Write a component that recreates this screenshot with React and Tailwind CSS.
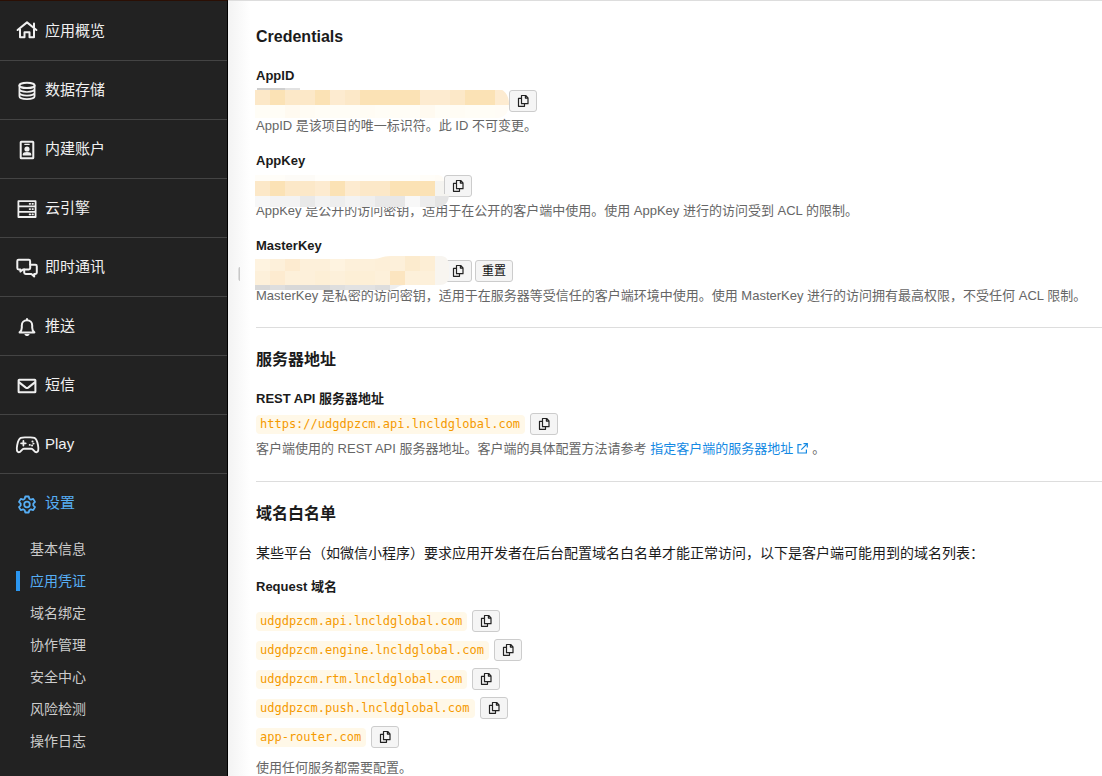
import React from "react";

const iconProps = {
  width: 24,
  height: 24,
  viewBox: "0 0 24 24",
  fill: "none",
  stroke: "currentColor",
  strokeWidth: 2,
  strokeLinejoin: "round",
  strokeLinecap: "round",
  overflow: "visible",
  "aria-hidden": true,
};

const icons = {
  home: (
    <svg {...iconProps}>
      <path d="M2.600 10 12 2.400l9.400 7.600M5 9v8.300h4.500v-5h5v5H19V9M19 3.400v4.200" />
    </svg>
  ),
  database: (
    <svg {...iconProps}>
      <ellipse cx="12" cy="6.400" rx="7.600" ry="2.700" />
      <path d="M4.400 6.400v10.800c0 1.600 3.400 2.900 7.600 2.900s7.600-1.300 7.600-2.900V6.400M4.400 10.100c0 1.600 3.400 2.900 7.600 2.900s7.600-1.300 7.600-2.900M4.400 13.700c0 1.600 3.400 2.900 7.600 2.900s7.600-1.300 7.600-2.900" strokeWidth="1.700" />
    </svg>
  ),
  account: (
    <svg {...iconProps}>
      <rect x="5.700" y="3.700" width="12.600" height="16.600" rx="0.600" />
      <path d="M9.800 6.400h4.400" strokeWidth="1.100" />
      <circle cx="12" cy="11" r="2.600" fill="currentColor" stroke="none" />
      <path d="M7.800 17.600v-1.400c0-1.600 1.500-2.300 4.200-2.300s4.200.7 4.200 2.300v1.400z" fill="currentColor" stroke="none" />
    </svg>
  ),
  server: (
    <svg {...iconProps}>
      <path d="M3.400 4.200h17.200v15.800H3.400zM3.400 9.400h17.200M3.400 14.800h17.200" strokeWidth="1.800" />
      <path d="M14.600 6.800h.6M17.400 6.800h.6M14.600 12.100h.6M17.400 12.100h.6M14.600 17.400h.6M17.400 17.400h.6" strokeWidth="1.700" />
    </svg>
  ),
  chat: (
    <svg {...iconProps}>
      <path d="M9.200 13.400H8l-2.600 2.200v-2.200H3.600c-.8 0-1.300-.5-1.300-1.300V5c0-.8.5-1.300 1.300-1.300h10.200c.8 0 1.300.5 1.300 1.300v3.600" />
      <path d="M15.200 8.800h5.200c.8 0 1.400.6 1.400 1.400v6.400c0 .8-.6 1.400-1.400 1.400h-1.200v2.400L16.400 18h-5.800c-.8 0-1.400-.6-1.400-1.400v-3.200h4.600c.8 0 1.400-.6 1.400-1.400z" />
    </svg>
  ),
  bell: (
    <svg {...iconProps}>
      <path d="M4.600 17.400c1.600-1.200 2.200-2.600 2.200-4.600v-2.300C6.800 7.300 9 5.300 12 5.300s5.200 2 5.200 5.200v2.300c0 2 .6 3.400 2.200 4.600z" />
      <path d="M12 3.900v1" />
      <path d="M9.400 19.100h5.200c-.4 1.400-1.400 2-2.600 2s-2.200-.6-2.600-2z" fill="currentColor" stroke="none" />
    </svg>
  ),
  mail: (
    <svg {...iconProps}>
      <rect x="3.600" y="5.700" width="16.800" height="12.600" rx="0.600" />
      <path d="m4.200 8.400 6.600 5.200c.8.600 1.600.600 2.400 0l6.600-5.200" />
    </svg>
  ),
  game: (
    <svg {...iconProps}>
      <path d="M5.800 4.900c1.800-.8 3.600-.5 6.800-.5s5-.3 6.800.5c2.200 1 3 4 3.600 7.300.6 3.300.8 6.400-1.200 7-2.300.7-3.500-3.500-5.400-3.500H8.800c-1.900 0-3.100 4.200-5.400 3.500-2-.6-1.800-3.700-1.200-7 .6-3.300 1.400-6.300 3.600-7.300z" strokeWidth="1.900" />
      <path d="M8.400 8v4.600M6.100 10.300h4.600" strokeWidth="1.800" />
      <path d="M14.700 11.900h.2M18.400 10.600h.2M17.400 8.500h.2M17 12.500h.2" strokeWidth="1.900" />
    </svg>
  ),
  gear: (
    <svg {...iconProps} strokeWidth="1.800">
      <circle cx="12" cy="11.500" r="2.800" />
      <path d="M10.300 3.500h3.400l.6 2.300 1.600.9 2.300-.8 1.800 3-1.700 1.700v1.800l1.700 1.700-1.800 3-2.300-.8-1.600.9-.6 2.300h-3.400l-.6-2.300-1.600-.9-2.300.8-1.800-3 1.700-1.700v-1.800L4 8.900l1.800-3 2.300.8 1.600-.9z" />
    </svg>
  ),
};

const navItems = [
  ["home", "应用概览"],
  ["database", "数据存储"],
  ["account", "内建账户"],
  ["server", "云引擎"],
  ["chat", "即时通讯"],
  ["bell", "推送"],
  ["mail", "短信"],
  ["game", "Play"],
];

const subItems = ["基本信息", "应用凭证", "域名绑定", "协作管理", "安全中心", "风险检测", "操作日志"];

const domains = [
  "udgdpzcm.api.lncldglobal.com",
  "udgdpzcm.engine.lncldglobal.com",
  "udgdpzcm.rtm.lncldglobal.com",
  "udgdpzcm.push.lncldglobal.com",
  "app-router.com",
];

function Sidebar() {
  return (
    <aside className="w-[228px] shrink-0 border-t border-r border-t-[#2b0f04] border-r-black bg-[#222222] pt-px text-[15px] text-[#f0f0f0]">
      <nav>
        {navItems.map(([icon, label]) => (
          <a key={label} href="#" className="flex h-[59px] items-center gap-1.5 border-b border-[#444444] pl-[15px]">
            <span className="pt-0.5">{icons[icon]}</span>
            <span>{label}</span>
          </a>
        ))}
        <a href="#" className="flex h-[59px] items-center gap-1.5 pl-[15px] text-[#56aef5]">
          <span className="pt-0.5">{icons.gear}</span>
          <span>设置</span>
        </a>
        <ul className="pl-4 text-sm text-[#cccccc]">
          {subItems.map((label) => (
            <li key={label} className="flex h-8 items-center">
              {label === "应用凭证" ? (
                <a href="#" aria-current="page" className="border-l-4 border-[#2b96f0] pl-2.5 text-[#56aef5]">
                  {label}
                </a>
              ) : (
                <a href="#" className="pl-3.5">
                  {label}
                </a>
              )}
            </li>
          ))}
        </ul>
      </nav>
    </aside>
  );
}

function CopyButton({ name }) {
  return (
    <button
      type="button"
      aria-label={"复制 " + name}
      className="flex h-[22px] w-7 shrink-0 items-center justify-center rounded-[3px] border border-[#cccccc] bg-[#f5f5f5] text-[#222222]"
    >
      <svg width="12" height="14" viewBox="0 0 12 14" fill="none" stroke="currentColor" strokeWidth="1.200" strokeLinejoin="round" aria-hidden="true">
        <path d="M4.500 1.500h4.200l2.300 2.300v5.900H4.500zM8.400 1.500v2.600H11M4.500 4.300H1.500v8h6V9.700" />
      </svg>
    </button>
  );
}

function Code({ children }) {
  return (
    <code className="h-[19px] rounded-[4px] bg-[#fff8e8] pr-[5px] pl-1 font-['DejaVu_Sans_Mono','Liberation_Mono',monospace] text-xs leading-[19px] text-[#f59a00]">
      {children}
    </code>
  );
}

function Blocks({ colors, y, height, size = 15 }) {
  return colors.map((fill, i) => <rect key={i} x={i * size} y={y} width={size} height={height} fill={fill} />);
}

const SOFT = "#fdebd0";
const WARM = "#fce8c8";
const DEEP = "#fbe2b5";

function AppIdMask() {
  return (
    <svg className="absolute -top-0.5 -left-px" width="256" height="32" viewBox="0 0 256 32" aria-hidden="true">
      <defs>
        <clipPath id="mask-id">
          <path d="M0 0h240c9 0 14 7 14 16s-5 14-12 14H0z" />
        </clipPath>
      </defs>
      <path d="M2 0h28v2H2z" fill="#cfcfcf" />
      <path d="M30 0h15v2H30z" fill="#e2e2e2" />
      <g clipPath="url(#mask-id)">
        <Blocks y={2} height={15} colors={[WARM, DEEP, WARM, WARM, DEEP, SOFT, WARM, DEEP, DEEP, DEEP, DEEP, SOFT, SOFT, WARM, DEEP, DEEP, SOFT]} />
        <Blocks y={17} height={13} colors={["#fffdf6", "#fffdf6", "#fffaf0", "#fffcf4", "#fffdf6", "#fffdf6", "#fffdf6", "#fffcf4", "#fffdf6", "#fffdf6", "#fffdf6", "#fffaf0", "#fffdf6", "#fffcf4", "#fffdf6", "#fffdf6", "#fffcf6"]} />
      </g>
    </svg>
  );
}

function AppKeyMask() {
  return (
    <svg className="absolute top-0 -left-px" width="196" height="34" viewBox="0 0 196 34" aria-hidden="true">
      <defs>
        <clipPath id="mask-key">
          <path d="M0 0h182c4 0 7 2 7 6v13h5c0 8-4 13-12 13H0z" />
        </clipPath>
      </defs>
      <g clipPath="url(#mask-key)">
        <Blocks y={0} height={6} colors={["#fffdf8", "#fffdf8", "#fdfbf7", "#fdfbf7", "#fffefb", "#fffefb", "#fffefb", "#fffefb", "#fffefb", "#fffefb", "#fffefb", "#fffdf8", "#fffcf6"]} />
        <Blocks y={6} height={15} colors={[WARM, DEEP, WARM, WARM, SOFT, DEEP, SOFT, WARM, WARM, DEEP, DEEP, DEEP, "#f5f4f0"]} />
        <Blocks y={21} height={12} colors={["#f7f7f7", "#f3f3f3", "#f3f3f3", "#e9e9e9", "#f2f2f2", "#eeeeee", "#f3f3f3", "#efefef", "#e8e8e8", "#e7e7e7", "#f8f8f8", "#ededed", "#e4e4e4"]} />
      </g>
    </svg>
  );
}

function MasterKeyMask() {
  return (
    <svg className="absolute -top-1 -left-px" width="196" height="36" viewBox="0 0 196 36" aria-hidden="true">
      <defs>
        <clipPath id="mask-master">
          <path d="M0 3h118c8 0 8-3 18-3h50c5 0 8 4 8 10v10c0 6-4 9-9 9h-35c-8 0-7 5-18 5H0z" />
        </clipPath>
      </defs>
      <g clipPath="url(#mask-master)">
        <Blocks y={0} height={15} colors={["#fef3e0", "#fdf0da", "#fdebd0", "#fdf0da", "#fdf0da", "#fef3e0", "#fdf0da", "#fdf0da", "#fdefd8", "#fdf0da", "#fcebce", "#fdeed5", "#f8f5f0"]} />
        <Blocks y={15} height={14} colors={["#fdf0da", "#fdebd0", "#fdf0da", "#fdf0da", "#fdefd6", "#fdf0da", "#fdefd6", "#fdefd6", "#fdf0da", "#fce5c0", "#fdf0da", "#fdf0da", "#f8f5f0"]} />
        <Blocks y={29} height={5} colors={["#d8d8d8", "#dedede", "#d8d8d8", "#d8d8d8", "#d8d8d8", "#dedede", "#e2e2e2", "#e2e2e2", "#dddddd", "#eeeeee"]} />
      </g>
    </svg>
  );
}

function Credential({ name, description, mask, valueClass, children }) {
  return (
    <div className="pb-[15px]">
      <h3 className="text-[13px] leading-5 font-bold">{name}</h3>
      <div className="relative mt-1 flex gap-[3px]">
        <div className={valueClass} />
        <CopyButton name={name} />
        {children}
        {mask}
      </div>
      <p className="mt-1 text-[13px] leading-5 text-[#666666]">{description}</p>
    </div>
  );
}

export default function App() {
  return (
    <div className="flex h-screen overflow-hidden bg-white font-['Liberation_Sans','Noto_Sans_CJK_SC',sans-serif] text-[#1b1b1b]">
      <Sidebar />
      <div className="flex w-7 shrink-0 items-center border-t border-[#dddddd] bg-linear-to-r from-[#f3f3f3] to-white to-80%">
        <span className="mb-[230px] ml-2.5 h-3.5 w-0.5 rounded-l-full border-r border-[#c8c8c8] bg-[#dddddd]" />
      </div>
      <main className="min-w-0 grow border-t border-[#dddddd] pt-6">
        <section>
          <h2 className="mb-[17px] text-base leading-6 font-bold">Credentials</h2>
          <Credential name="AppID" description="AppID 是该项目的唯一标识符。此 ID 不可变更。" valueClass="w-[250px]" mask={<AppIdMask />} />
          <Credential
            name="AppKey"
            description="AppKey 是公开的访问密钥，适用于在公开的客户端中使用。使用 AppKey 进行的访问受到 ACL 的限制。"
            valueClass="w-[185px]"
            mask={<AppKeyMask />}
          />
          <Credential
            name="MasterKey"
            description="MasterKey 是私密的访问密钥，适用于在服务器等受信任的客户端环境中使用。使用 MasterKey 进行的访问拥有最高权限，不受任何 ACL 限制。"
            valueClass="w-[185px]"
            mask={<MasterKeyMask />}
          >
            <button type="button" className="h-[22px] rounded-[3px] border border-[#cccccc] bg-[#f5f5f5] px-1.5 text-xs leading-5 text-[#111111]">
              重置
            </button>
          </Credential>
        </section>

        <section className="mt-1.5 border-t border-[#dddddd] pt-5">
          <h2 className="text-base leading-6 font-bold">服务器地址</h2>
          <h3 className="mt-[17px] text-[13px] leading-5 font-bold">REST API 服务器地址</h3>
          <div className="mt-1 flex items-center gap-[5px]">
            <Code>https://udgdpzcm.api.lncldglobal.com</Code>
            <CopyButton name="REST API 服务器地址" />
          </div>
          <p className="mt-1 text-[13px] leading-5 text-[#666666]">
            客户端使用的 REST API 服务器地址。客户端的具体配置方法请参考{" "}
            <a href="#" className="text-[#1489e3]">
              指定客户端的服务器地址
              <svg className="mx-1 inline-block align-[-1px]" width="11" height="11" viewBox="0 0 11 11" fill="none" stroke="currentColor" strokeWidth="1.200" aria-hidden="true">
                <path d="M4.500 1.600H1v8.400h8.400V6.500M6.500.700h3.800v3.800M10.300.700 4.300 6.700" />
              </svg>
            </a>
            。
          </p>
        </section>

        <section className="mt-[22px] border-t border-[#dddddd] pt-5">
          <h2 className="text-base leading-6 font-bold">域名白名单</h2>
          <p className="mt-[17px] text-sm leading-5">
            某些平台（如微信小程序）要求应用开发者在后台配置域名白名单才能正常访问，以下是客户端可能用到的域名列表：
          </p>
          <h3 className="mt-3.5 text-[13px] leading-5 font-bold">Request 域名</h3>
          <ul className="mt-[13px] flex flex-col gap-[7px]">
            {domains.map((domain) => (
              <li key={domain} className="flex items-center gap-[5px]">
                <Code>{domain}</Code>
                <CopyButton name={domain} />
              </li>
            ))}
          </ul>
          <p className="mt-2.5 text-[13px] leading-5 text-[#666666]">使用任何服务都需要配置。</p>
        </section>
      </main>
    </div>
  );
}
